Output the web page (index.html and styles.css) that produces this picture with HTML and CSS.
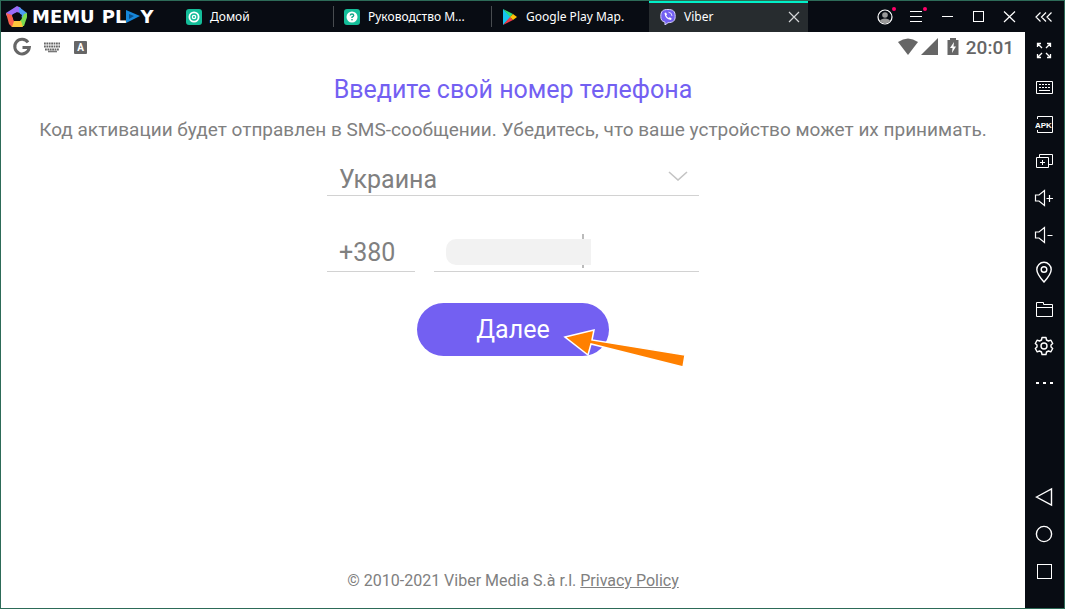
FILE: index.html
```html
<!DOCTYPE html>
<html lang="ru">
<head>
  <meta charset="UTF-8" />
  <meta name="viewport" content="width=device-width, initial-scale=1.0"/>
  <title>MEmu Play - Viber</title>
  <link rel="stylesheet" href="styles.css">
</head>
<body>

  <div class="emulator">

    <header class="titlebar">
      <div class="brand">
        <svg class="brand-icon" width="22" height="22" viewBox="0 0 22 22">
          <path d="M11 0 L15 2 L15 6 L7 8 L5 13 L0 9 V7 Z" fill="#9a6cf8"/>
          <path d="M13 1 L21 7 L20 14 L16 12 L13 6 Z" fill="#4c9cf4"/>
          <path d="M21 7 L21 11 L18 20 L13 20 L11 15 L15 14 L18 8 Z" fill="#7bdc50"/>
          <path d="M17 21 H6 L4 17 L8 15 L15 15 Z" fill="#fcc63c"/>
          <path d="M0 7 L6 9 L8 15 L6 21 L3 18 Z" fill="#f8604c"/>
          <path d="M11 6 L16 9 L14 15 L8 15 L6 9 Z" fill="#080c13"/>
        </svg>
        <span class="brand-name">MEMU</span>
        <span class="brand-name">PL<svg width="14" height="13" viewBox="0 0 14 13"><path d="M0 0 L14 6 L0 13 Z" fill="#1686d9"/><path d="M3 4 L8 6 L3 9 Z" fill="#0b4c86"/></svg>Y</span>
      </div>

      <nav class="tabs">
        <a href="#" class="tab">
          <svg width="16" height="16" viewBox="0 0 16 16">
            <rect width="16" height="16" rx="3" fill="#14bd99"/>
            <circle cx="8" cy="8" r="5.5" fill="#fff"/>
            <circle cx="8" cy="8" r="3" fill="none" stroke="#14bd99" stroke-width="1.4"/>
            <circle cx="8" cy="8" r="1" fill="#14bd99"/>
          </svg>
          <span class="tab-name">Домой</span>
        </a>
        <a href="#" class="tab">
          <svg width="16" height="16" viewBox="0 0 16 16">
            <rect width="16" height="16" rx="3" fill="#14bd99"/>
            <circle cx="8" cy="8" r="5.5" fill="#fff"/>
            <path d="M6.3 6.5 Q6.3 5 8 5 Q9.7 5 9.7 6.5 Q9.7 7.4 8 8.2 V9" fill="none" stroke="#14a98a" stroke-width="1.4"/>
            <rect x="7.3" y="10" width="1.4" height="1.4" fill="#14a98a"/>
          </svg>
          <span class="tab-name">Руководство M...</span>
        </a>
        <a href="#" class="tab">
          <svg width="16" height="16" viewBox="0 0 16 16">
            <path d="M1 0 L9 8 L1 16 Z" fill="#15c5ee"/>
            <path d="M1 0 L11 5 L8 8 Z" fill="#2fdc79"/>
            <path d="M1 16 L11 11 L8 8 Z" fill="#ef3b4c"/>
            <path d="M11 5 L15 8 L11 11 L8 8 Z" fill="#ffc107"/>
          </svg>
          <span class="tab-name">Google Play Map.</span>
        </a>
        <div class="tab active">
          <svg width="16" height="16" viewBox="0 0 16 16">
            <path d="M8 0.5 C13 0.5 15.2 2 15.2 7.3 C15.2 12 13 13.5 8 13.7 L5 16 V13.2 C2 12.3 0.8 11 0.8 7.3 C0.8 2 3 0.5 8 0.5 Z" fill="#7360f2" stroke="#d8d3fb"/>
            <path d="M4.5 4 L6 3.5 L7 5.5 L6.2 6.6 Q7 8.4 8.7 9 L9.8 8.2 L11.7 9.5 L11 11 Q5 10 4.5 4 Z" fill="#fff"/>
            <path d="M8.5 3.2 Q12 3.6 12 7" fill="none" stroke="#fff" stroke-width=".8"/>
          </svg>
          <span class="tab-name">Viber</span>
          <button class="tab-close" aria-label="Закрыть вкладку">
            <svg width="12" height="12" viewBox="0 0 12 12"><path d="M1 1 L11 11 M11 1 L1 11" stroke="#d4d6d8" stroke-width="1.2"/></svg>
          </button>
        </div>
      </nav>

      <div class="window-controls">
        <button class="win-btn notify" aria-label="Профиль">
          <svg width="16" height="16" viewBox="0 0 16 16">
            <circle cx="8" cy="8" r="7" fill="#080c13" stroke="#fff" stroke-width="1.2"/>
            <circle cx="8" cy="6" r="2.8" fill="#999"/>
            <path d="M2.8 12 Q4 9.5 8 9.5 Q12 9.5 13.2 12 Q11 14.4 8 14.4 Q5 14.4 2.8 12 Z" fill="#999"/>
          </svg>
        </button>
        <button class="win-btn notify" aria-label="Меню">
          <svg width="16" height="16" viewBox="0 0 16 16"><path d="M2 2.5 H14 M2 7.5 H14 M2 12.5 H14" stroke="#fff"/></svg>
        </button>
        <button class="win-btn" aria-label="Свернуть">
          <svg width="16" height="16" viewBox="0 0 16 16"><path d="M3 7.5 H14" stroke="#fff"/></svg>
        </button>
        <button class="win-btn" aria-label="Развернуть">
          <svg width="16" height="16" viewBox="0 0 16 16"><rect x="3.5" y="2.5" width="10" height="10" fill="none" stroke="#fff"/></svg>
        </button>
        <button class="win-btn" aria-label="Закрыть">
          <svg width="16" height="16" viewBox="0 0 16 16"><path d="M3 2.5 L14 13 M14 2.5 L3 13" stroke="#fff" stroke-width="1.2"/></svg>
        </button>
        <button class="win-btn collapse" aria-label="Скрыть панель">
          <svg width="18" height="16" viewBox="0 0 18 16"><path d="M5.5 3.5 L1 8 L5.5 12.5 M11 3.5 L6.5 8 L11 12.5 M16.5 3.5 L12 8 L16.5 12.5" fill="none" stroke="#fff" stroke-width="1.2"/></svg>
        </button>
      </div>
    </header>

    <div class="workspace">

      <main class="screen">
        <div class="status-bar">
          <div class="status-left">
            <svg width="20" height="20" viewBox="0 0 20 20"><path d="M16 5.3 A7.3 7.3 0 1 0 17.3 10.5 H10.5" fill="none" stroke="#666" stroke-width="3"/></svg>
            <svg width="18" height="20" viewBox="0 0 18 20"><path d="M0 6.5 H16 M0 9.5 H16 M1 12.5 H15" stroke="#666" stroke-width="1.8" stroke-dasharray="1.8 .6"/><path d="M4 14.5 H13" stroke="#777" stroke-width="1.6"/></svg>
            <span class="lang-badge">A</span>
          </div>
          <div class="status-right">
            <svg width="20" height="18" viewBox="0 0 20 18"><path d="M0 4 Q10 -3 20 4 L10 17 Z" fill="#666"/></svg>
            <svg width="17" height="18" viewBox="0 0 17 18"><path d="M17 0 V17 H0 Z" fill="#666"/></svg>
            <svg class="battery" width="12" height="18" viewBox="0 0 12 18"><path d="M3 0 H9 V2 H11.5 V17 H0.5 V2 H3 Z" fill="#666"/><path d="M7 4 L3 10 H5.5 L5 15 L9 8.5 H6.5 Z" fill="#fff"/></svg>
            <span class="clock">20:01</span>
          </div>
        </div>

        <h1 class="title">Введите свой номер телефона</h1>
        <p class="hint">Код активации будет отправлен в SMS-сообщении. Убедитесь, что ваше устройство может их принимать.</p>

        <form class="phone-form">
          <div class="country-field">
            <select class="field country" aria-label="Страна">
              <option>Украина</option>
            </select>
            <svg class="chevron" width="20" height="10" viewBox="0 0 20 10"><path d="M1 1 L10 9 L19 1" fill="none" stroke="#c4c4c4" stroke-width="1.6"/></svg>
          </div>
          <div class="number-row">
            <input class="field code" type="text" value="+380" aria-label="Код страны">
            <div class="number-field">
              <input class="field" type="tel" aria-label="Номер телефона">
              <span class="caret"></span>
              <span class="number-mask"></span>
            </div>
          </div>
          <div class="submit-wrap">
            <button class="submit" type="button">Далее</button>
            <svg class="pointer" width="126" height="44" viewBox="0 0 126 44">
              <path d="M2 11 L31 4 L29 14 L122 29 L120 41 L28 18 L25 29 Z" fill="#ff8000" stroke="#fff" stroke-width="1.5"/>
            </svg>
          </div>
        </form>

        <footer class="copyright">© 2010-2021 Viber Media S.à r.l. <a href="#">Privacy Policy</a></footer>
      </main>

      <aside class="sidebar">
        <div class="tools">
          <button aria-label="Полный экран">
            <svg width="18" height="18" viewBox="0 0 18 18"><path d="M2.5 6 V2.5 H6 M3 3 L7 7 M12 2.5 H15.5 V6 M15 3 L11 7 M2.5 13 V16.5 H6 M3 16 L7 12 M12 16.5 H15.5 V13 M15 16 L11 12" stroke-width="1.3"/></svg>
          </button>
          <button aria-label="Клавиатура">
            <svg width="18" height="18" viewBox="0 0 18 18"><path d="M1.5 3.5 H17.5 V15.5 H1.5 Z"/><path d="M4 6.5 H16 M4 9.5 H16" stroke-dasharray="2 1"/><path d="M4 12.5 H15"/></svg>
          </button>
          <button aria-label="Установить APK">
            <svg width="18" height="18" viewBox="0 0 18 18"><path d="M2.5 4 V1.5 H17.5 V17.5 H2.5 V15"/><text class="apk" x="0" y="13">APK</text></svg>
          </button>
          <button aria-label="Мульти-окна">
            <svg width="18" height="18" viewBox="0 0 18 18"><path d="M4.5 6 V2.5 H17.5 V12.5 H14"/><path d="M1.5 5.5 H13.5 V15.5 H1.5 Z M5 10.5 H10 M7.5 8 V13"/></svg>
          </button>
          <button aria-label="Громче">
            <svg width="20" height="18" viewBox="0 0 20 18"><path d="M1.5 6 H5 L10.5 1.5 V16.5 L5 12 H1.5 Z M12.5 9.5 H19 M15.5 6 V13" stroke-width="1.2"/></svg>
          </button>
          <button aria-label="Тише">
            <svg width="20" height="18" viewBox="0 0 20 18"><path d="M1.5 6 H5 L10.5 1.5 V16.5 L5 12 H1.5 Z M13.5 9.5 H18.5" stroke-width="1.2"/></svg>
          </button>
          <button aria-label="Местоположение">
            <svg width="18" height="22" viewBox="0 0 18 22"><path d="M9 21 Q1.8 13 1.8 8.5 A7.2 7.2 0 0 1 16.2 8.5 Q16.2 13 9 21 Z" stroke-width="1.4"/><circle cx="9" cy="8.5" r="2.8" stroke-width="1.4"/></svg>
          </button>
          <button aria-label="Общая папка">
            <svg width="18" height="18" viewBox="0 0 18 18"><path d="M1.5 2.5 H8.5 V4.5 H17.5 V16.5 H1.5 Z M1.5 7.5 H17.5"/></svg>
          </button>
          <button aria-label="Настройки">
            <svg width="20" height="20" viewBox="0 0 20 20"><path d="M8 1.5 H12 L12.5 4 L14.5 5 L16.8 4.2 L18.7 7.5 L17 9 V11 L18.7 12.5 L16.8 15.8 L14.5 15 L12.5 16 L12 18.5 H8 L7.5 16 L5.5 15 L3.2 15.8 L1.3 12.5 L3 11 V9 L1.3 7.5 L3.2 4.2 L5.5 5 L7.5 4 Z" stroke-width="1.4" stroke-linejoin="round"/><circle cx="10" cy="10" r="3" stroke-width="1.4"/></svg>
          </button>
          <button aria-label="Ещё">
            <svg width="18" height="18" viewBox="0 0 18 18"><path d="M1 9 H4 M8 9 H11 M15 9 H18" stroke-width="2"/></svg>
          </button>
        </div>
        <div class="nav-keys">
          <button aria-label="Назад">
            <svg width="18" height="20" viewBox="0 0 18 20"><path d="M1.5 10 L16.5 2 V18 Z" stroke-width="1.4"/></svg>
          </button>
          <button aria-label="Домой">
            <svg width="18" height="18" viewBox="0 0 18 18"><circle cx="9" cy="9" r="7.6" stroke-width="1.4"/></svg>
          </button>
          <button aria-label="Недавние">
            <svg width="18" height="18" viewBox="0 0 18 18"><rect x="2.5" y="2.5" width="14" height="14"/></svg>
          </button>
        </div>
      </aside>

    </div>
  </div>

</body>
</html>
```

FILE: styles.css
```css
* {
  box-sizing: border-box;
}

body {
  margin: 0;
  font-family: Roboto, sans-serif;
  color: #808080;
  background: #fff;
}

button {
  padding: 0;
  border: none;
  background: none;
  font-family: inherit;
  cursor: pointer;
}

svg {
  display: block;
  flex-shrink: 0;
}

.emulator {
  display: flex;
  flex-direction: column;
  min-height: 100vh;
  border: 1px solid #2d6b58;
}

/* title bar */
.titlebar {
  display: flex;
  height: 31px;
  background: #080c13;
}

.brand {
  display: flex;
  align-items: center;
  gap: 4px;
  width: 174px;
  padding-left: 5px;
}

.brand-name {
  display: flex;
  align-items: center;
  font: bold 18px/30px "DejaVu Sans", sans-serif;
  color: #fff;
}

.brand-name + .brand-name {
  margin-left: 3px;
}

.tabs {
  display: flex;
}

.tab {
  position: relative;
  display: flex;
  align-items: center;
  gap: 8px;
  width: 158px;
  padding: 0 8px 0 11px;
  font: 12px/30px "Noto Sans", sans-serif;
  color: #fff;
  text-decoration: none;
}

.tab + .tab::before {
  content: "";
  position: absolute;
  left: 0;
  top: 5px;
  height: 21px;
  border-left: 1px solid #484c50;
}

.tab.active {
  width: 159px;
  padding-bottom: 2px;
  background: #272c2f;
  border-top: 2px solid #00f0c8;
}

.tab.active::before {
  display: none;
}

.tab-name {
  flex: 1;
  white-space: nowrap;
}

.window-controls {
  display: flex;
  margin-left: auto;
}

.win-btn {
  position: relative;
  display: flex;
  align-items: center;
  justify-content: center;
  width: 31px;
  padding-right: 1px;
}

.win-btn.collapse {
  width: 39px;
}

.notify::after {
  content: "";
  position: absolute;
  top: 6px;
  right: 5px;
  width: 4px;
  height: 4px;
  border-radius: 50%;
  background: #ff0068;
}

/* android screen */
.workspace {
  display: flex;
  flex: 1;
}

.screen {
  display: flex;
  flex-direction: column;
  align-items: center;
  flex: 1;
  padding-bottom: 17px;
  background: #fff;
}

.status-bar {
  display: flex;
  justify-content: space-between;
  align-items: center;
  align-self: stretch;
  height: 30px;
  padding: 0 11px;
}

.status-left,
.status-right {
  display: flex;
  align-items: center;
}

.status-left {
  gap: 12px;
}

.status-right {
  gap: 3px;
}

.battery {
  margin: 0 4px 0 6px;
}

.lang-badge {
  width: 13px;
  height: 13px;
  border-radius: 1px;
  background: #666;
  color: #fff;
  font-size: 10px;
  font-weight: bold;
  line-height: 13px;
  text-align: center;
}

.clock {
  font-size: 19px;
  font-weight: 500;
  color: #666;
}

.title {
  margin: 12px 0;
  font-size: 25px;
  font-weight: 400;
  line-height: 32px;
  color: #7360f2;
}

.hint {
  margin: 0 0 16px;
  font-size: 19px;
  line-height: 24px;
  text-align: center;
}

.phone-form {
  width: 372px;
}

.field {
  width: 100%;
  height: 38px;
  padding: 0 12px;
  border: none;
  border-bottom: 1px solid #d2d2d2;
  border-radius: 0;
  background: none;
  appearance: none;
  outline: none;
  font: 25px Roboto, sans-serif;
  color: #808080;
}

.country {
  padding-top: 6px;
}

.country-field,
.number-field,
.submit-wrap {
  position: relative;
}

.chevron {
  position: absolute;
  right: 11px;
  top: 13px;
  pointer-events: none;
}

.number-row {
  display: flex;
  gap: 19px;
  margin: 38px 0 31px;
}

.code {
  width: 88px;
}

.number-field {
  flex: 1;
}

.number-mask {
  position: absolute;
  left: 12px;
  top: 5px;
  width: 145px;
  height: 26px;
  border-radius: 10px 0 0 10px;
  background: #f2f2f2;
}

.caret {
  position: absolute;
  left: 148px;
  top: 0;
  width: 2px;
  height: 34px;
  background: #bbb;
}

.submit-wrap {
  width: 192px;
  margin: 0 auto;
}

.submit {
  width: 100%;
  height: 53px;
  border-radius: 27px;
  background: #7360f2;
  font-size: 25px;
  color: #fff;
}

/* orange arrow over the button */
.pointer {
  position: absolute;
  left: 146px;
  top: 23px;
  pointer-events: none;
}

.copyright {
  margin-top: auto;
  font-size: 16px;
  line-height: 20px;
}

.copyright a {
  color: inherit;
}

/* right toolbar */
.sidebar {
  display: flex;
  flex-direction: column;
  justify-content: space-between;
  width: 39px;
  padding-bottom: 18px;
  background: #080c13;
}

.sidebar button {
  display: flex;
  align-items: center;
  justify-content: center;
  width: 100%;
  height: 37px;
  padding: 0 1px 1px 0;
}

.sidebar svg {
  fill: none;
  stroke: #fff;
}

.apk {
  font: bold 8px "Liberation Sans", sans-serif;
  fill: #fff;
  stroke: none;
}
```
